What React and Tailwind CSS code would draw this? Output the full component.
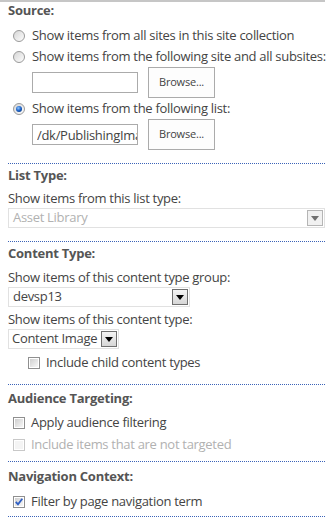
import React from "react";

const font = { fontFamily: '"Segoe UI", "Open Sans", "Noto Sans", sans-serif' };

function Radio({ checked }) {
  return (
    <svg width="12" height="12" viewBox="0 0 12 12" className="shrink-0">
      <defs>
        <linearGradient id="rg" x1="0" y1="0" x2="1" y2="1">
          <stop offset="0" stopColor="#d4d4d4" />
          <stop offset="1" stopColor="#ffffff" />
        </linearGradient>
        <radialGradient id="rb" cx="0.4" cy="0.35" r="0.7">
          <stop offset="0" stopColor="#8ec5ff" />
          <stop offset="0.6" stopColor="#1e64c8" />
          <stop offset="1" stopColor="#0b3f8f" />
        </radialGradient>
      </defs>
      <circle cx="6" cy="6" r="5.5" fill="url(#rg)" stroke="#9a9a9a" strokeWidth="1" />
      {checked && <circle cx="6" cy="6" r="3" fill="url(#rb)" />}
    </svg>
  );
}

function Checkbox({ checked, disabled }) {
  return (
    <svg width="12" height="12" viewBox="0 0 12 12" className="shrink-0">
      <defs>
        <linearGradient id="cg" x1="0" y1="0" x2="1" y2="1">
          <stop offset="0" stopColor="#cfcfcf" />
          <stop offset="1" stopColor="#f7f7f7" />
        </linearGradient>
      </defs>
      <rect x="0.5" y="0.5" width="11" height="11" fill="#fff" stroke={disabled ? "#c8c8c8" : "#8f8f8f"} />
      <rect x="2" y="2" width="8" height="8" fill={disabled ? "#f4f4f4" : "url(#cg)"} />
      {checked && (
        <path d="M2.8 5.8 L5 8.3 L9.3 2.8" fill="none" stroke="#2f5fc4" strokeWidth="1.8" />
      )}
    </svg>
  );
}

function Arrow({ disabled }) {
  return (
    <div
      className={
        disabled
          ? "shrink-0 w-[16px] h-[16px] border border-[#b5b5b5] bg-[#f1f1f1] flex items-center justify-center"
          : "shrink-0 w-[16px] h-[16px] border border-[#6f6f6f] bg-gradient-to-b from-[#f4f4f4] to-[#d6d6d6] flex items-center justify-center"
      }
    >
      <svg width="8" height="5" viewBox="0 0 8 5">
        <path d="M0 0 H8 L4 5 Z" fill={disabled ? "#707070" : "#000"} />
      </svg>
    </div>
  );
}

function Section({ children, className = "" }) {
  return (
    <div className={"flex flex-col border-b border-dotted border-[#3b63b8] " + className}>{children}</div>
  );
}

function Header({ children, className = "" }) {
  return (
    <div className={"h-[20px] flex items-center font-bold text-[13px] tracking-[-0.25px] text-[#555] " + className}>{children}</div>
  );
}

function Browse() {
  return (
    <div className="w-[67px] h-[31px] border border-[#ababab] bg-[#fdfdfd] flex items-center justify-center text-[11px] tracking-[-0.2px] text-[#444]">
      Browse...
    </div>
  );
}

export default function App() {
  return (
    <div className="w-[333px] h-[522px] bg-white text-[#444] text-[13px] tracking-[-0.3px] overflow-hidden whitespace-nowrap" style={font}>
      <div className="ml-[8px] w-[317px]">
        <div className="border-t-2 border-[#c6c6c6] -ml-[8px] w-[325px]" />
        <Section className="pb-[13px]">
          <Header className="-mt-[1px]">Source:</Header>
          <div className="mt-[4px] h-[22px] flex items-center gap-[7px] pl-[5px]">
            <Radio />
            <span>Show items from all sites in this site collection</span>
          </div>
          <div className="h-[20px] flex items-center gap-[7px] pl-[5px]">
            <Radio />
            <span>Show items from the following site and all subsites:</span>
          </div>
          <div className="h-[31px] flex items-center pl-[24px] gap-[10px]">
            <div className="w-[106px] h-[21px] border border-[#ababab] bg-white" />
            <Browse />
          </div>
          <div className="h-[21px] flex items-center gap-[7px] pl-[5px]">
            <Radio checked />
            <span>Show items from the following list:</span>
          </div>
          <div className="h-[31px] flex items-center pl-[24px] gap-[10px]">
            <input
              readOnly
              value="/dk/PublishingImages"
              className="w-[106px] h-[21px] border border-[#ababab] bg-white pl-[4px] text-[13px] tracking-[-0.3px] text-[#444] outline-none"
              style={font}
            />
            <Browse />
          </div>
        </Section>

        <Section className="pb-[13px]">
          <Header className="mt-[2px]">List Type:</Header>
          <div className="mt-[4px] h-[18px] flex items-center">Show items from this list type:</div>
          <div className="h-[20px] w-[317px] border border-[#e1e1e1] flex items-center justify-between pl-[4px] pr-[1px] text-[#b1b1b1]">
            <span>Asset Library</span>
            <Arrow disabled />
          </div>
        </Section>

        <Section className="pb-[11px]">
          <Header className="mt-[2px]">Content Type:</Header>
          <div className="mt-[5px] h-[18px] flex items-center">Show items of this content type group:</div>
          <div className="h-[20px] w-[182px] border border-[#e1e1e1] flex items-center justify-between pl-[4px] pr-[1px]">
            <span>devsp13</span>
            <Arrow />
          </div>
          <div className="mt-[4px] h-[18px] flex items-center">Show items of this content type:</div>
          <div className="h-[20px] w-[111px] border border-[#e1e1e1] flex items-center justify-between pl-[3px] pr-[1px] gap-[2px]">
            <span>Content Image</span>
            <Arrow />
          </div>
          <div className="mt-[4px] h-[20px] flex items-center gap-[6px] pl-[20px]">
            <Checkbox />
            <span>Include child content types</span>
          </div>
        </Section>

        <Section className="pb-[5px]">
          <Header className="mt-[4px]">Audience Targeting:</Header>
          <div className="mt-[3px] h-[22px] flex items-center gap-[6px] pl-[5px]">
            <Checkbox />
            <span>Apply audience filtering</span>
          </div>
          <div className="h-[22px] flex items-center gap-[6px] pl-[5px] text-[#b1b1b1]">
            <Checkbox disabled />
            <span>Include items that are not targeted</span>
          </div>
        </Section>

        <Section className="pb-[3px]">
          <Header className="mt-[5px]">Navigation Context:</Header>
          <div className="mt-[4px] h-[22px] flex items-center gap-[6px] pl-[5px]">
            <Checkbox checked />
            <span>Filter by page navigation term</span>
          </div>
        </Section>
      </div>
    </div>
  );
}
